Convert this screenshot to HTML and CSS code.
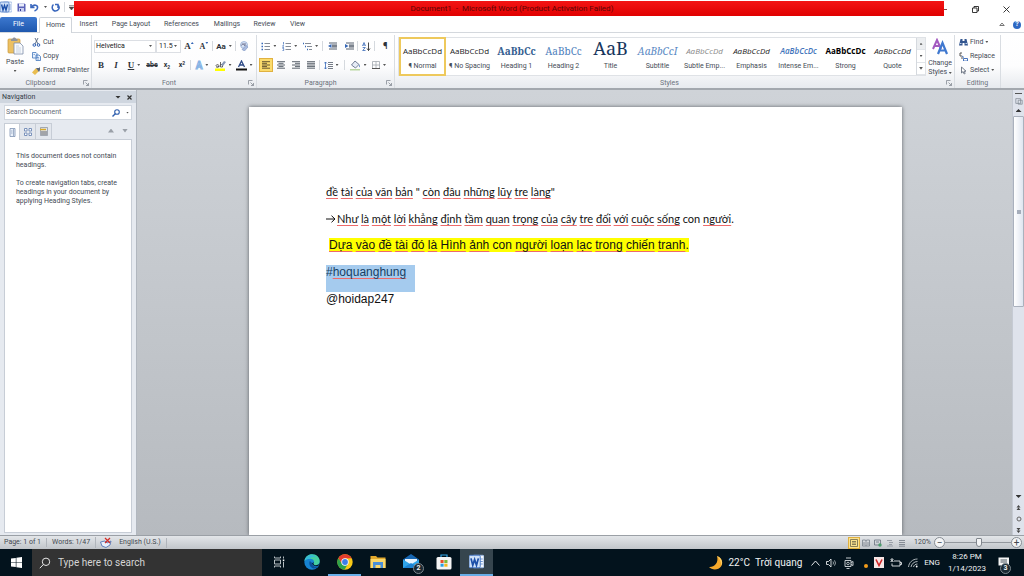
FILE: index.html
```html
<!DOCTYPE html>
<html lang="vi">
<head>
<meta charset="utf-8">
<title>Document1 - Microsoft Word</title>
<link rel="stylesheet" href="styles.css">
</head>
<body>
<svg class="defs" aria-hidden="true">
  <symbol id="word" viewBox="0 0 12 12"><rect x="3" y="1" width="9" height="10" rx="1" fill="#f4f8fe" stroke="#8cacdc" stroke-width=".7"/><path d="M9 4h2M9 6h2M9 8h2" stroke="#5b87cc" stroke-width=".7"/><rect x="0" y="1" width="9" height="10" rx="1" fill="#cfe0f7" stroke="#3c6fc0" stroke-width=".7"/><path d="M1.600 3.500 3 9 4.500 4.500 6 9 7.500 3.500" fill="none" stroke="#1d4fa8" stroke-width="1.400"/></symbol>
  <symbol id="launch" viewBox="0 0 6 6"><path d="M.5 4.500V.5h4M2.500 2.500l3 3M5.500 3v2.500H3" fill="none" stroke="#858b94" stroke-width=".8"/></symbol>
  <symbol id="globe" viewBox="0 0 10 10"><path d="M1 2h6v6H1zM4 4h5v5H4z" fill="none" stroke="#7f8791" stroke-width=".9"/></symbol>
</svg>

<header class="titlebar">
  <div class="quick">
    <svg width="12" height="12"><use href="#word"/></svg>
    <button aria-label="Save"><svg width="9" height="9" viewBox="0 0 9 9"><path d="M.5.5h7l1 1v7h-8z" fill="#5b62b8"/><path d="M2 .5h5v3H2z" fill="#e8ecfa"/><path d="M2 5h5v4H2z" fill="#c9cff0"/><path d="M3 6h1v2H3z" fill="#333a90"/></svg></button>
    <button class="wide" aria-label="Undo"><svg width="9" height="9" viewBox="0 0 9 9"><path d="M1 1v3.500h3.500M1.500 4C4 1 8 2 7.500 5 7.300 6.800 6 7.500 4.500 8" fill="none" stroke="#3a67bd" stroke-width="1.600"/></svg><i class="caret"></i></button>
    <button aria-label="Repeat"><svg width="9" height="9" viewBox="0 0 9 9"><path d="M2.500 1.500C0 4 1.500 8 4.500 8s5-3.500 2.500-6M7 5V1.500H4" fill="none" stroke="#3a67bd" stroke-width="1.500"/></svg></button>
    <i class="sep"></i>
    <button class="slim" aria-label="Customize"><svg width="5" height="5" viewBox="0 0 5 5"><path d="M0 .5h5M0 2h5L2.500 5z" fill="#444" stroke="#444" stroke-width=".5"/></svg></button>
  </div>
  <h1 class="title">Document1&nbsp; - &nbsp;Microsoft Word (Product Activation Failed)</h1>
  <div class="window">
    <button class="mini" aria-label="Minimize"></button>
    <button aria-label="Restore"><svg width="7" height="7" viewBox="0 0 7 7"><path d="M.5 2h4.500v4.500H.5zM2 2V.5h4.500V5H5" fill="none" stroke="#222" stroke-width=".9"/></svg></button>
    <button aria-label="Close"><svg width="7" height="7" viewBox="0 0 7 7"><path d="m.5.5 6 6m0-6-6 6" stroke="#222" stroke-width=".9"/></svg></button>
  </div>
</header>

<nav class="tabs">
  <button class="file">File</button>
  <button class="tab on">Home</button>
  <button class="tab">Insert</button>
  <button class="tab layout">Page Layout</button>
  <button class="tab refs">References</button>
  <button class="tab mail">Mailings</button>
  <button class="tab">Review</button>
  <button class="tab">View</button>
  <div class="help">
    <svg width="6" height="5" viewBox="0 0 6 5"><path d="M.8 3.500 3 1l2.200 2.500z" fill="none" stroke="#555" stroke-width=".8"/></svg>
    <button class="q" aria-label="Help">?</button>
  </div>
</nav>

<section class="ribbon">
  <div class="group clipboard">
    <div class="body">
      <button class="big"><svg width="17" height="18" viewBox="0 0 17 18"><rect x="1" y="2" width="12" height="14" rx="1" fill="#ecc062" stroke="#c7953a" stroke-width=".7"/><path d="M4 3.500V2h1.500C5.500 0 9 0 9 2h1.500v2H4z" fill="#8e939c"/><path d="M7 6h6l3 3v8H7z" fill="#f8fafd" stroke="#7d8ea8" stroke-width=".8"/><path d="M9 9h3M9 11h5M9 13h5M9 15h5" stroke="#b4c1d4" stroke-width=".7"/></svg><span>Paste</span><i class="caret"></i></button>
      <div class="stack">
        <button><svg width="9" height="9" viewBox="0 0 9 9"><path d="m3 0 3 6M6 0 3 6" stroke="#52627c" stroke-width=".9"/><circle cx="2.300" cy="7" r="1.300" fill="none" stroke="#2e5fb3"/><circle cx="6.500" cy="7" r="1.300" fill="none" stroke="#2e5fb3"/></svg>Cut</button>
        <button><svg width="9" height="9" viewBox="0 0 9 9"><path d="M.5.5h3.500l1 1V6H.5zM4 3h3l1.500 1.500v4H4z" fill="#e9f1fc" stroke="#4377bd" stroke-width=".8"/><path d="M5 5.500h2M5 7h2M1.500 2.500H3" stroke="#4377bd" stroke-width=".6"/></svg>Copy</button>
        <button><svg width="9" height="9" viewBox="0 0 9 9"><path d="M0 6.500 4 2l3 3-4 4z" fill="#e9bd50"/><path d="M4 2h3l1-1v3L7 6z" fill="#59647a"/></svg>Format Painter</button>
      </div>
    </div>
    <footer>Clipboard<button aria-label="Clipboard options"><svg width="6" height="6"><use href="#launch"/></svg></button></footer>
  </div>

  <div class="group font">
    <div class="body rows">
      <div class="row">
        <button class="combo family">Helvetica<i class="caret"></i></button><button class="combo size">11.5<i class="caret"></i></button>
        <button class="t serif" aria-label="Grow font">A<i class="caret up blue"></i></button>
        <button class="t serif small" aria-label="Shrink font">A<i class="caret blue"></i></button>
        <i class="sep"></i>
        <button class="t d">Aa<i class="caret"></i></button>
        <i class="sep"></i>
        <button class="t" aria-label="Clear formatting"><svg width="10" height="10" viewBox="0 0 10 10"><circle cx="5" cy="4" r="3.500" fill="#d5e1f4" stroke="#8ba6cf" stroke-width=".7"/><path d="M2.500 4.500 4 2.500l1.500 2M6 2v3" fill="none" stroke="#446" stroke-width=".7"/><path d="m3 8.500 4-4 2 1.500-3.500 4z" fill="#a9bbdf" stroke="#6d87b9" stroke-width=".5"/></svg></button>
      </div>
      <div class="row">
        <button class="t serif">B</button>
        <button class="t serif it">I</button>
        <button class="t serif d"><u>U</u><i class="caret"></i></button>
        <button class="t small"><s>abe</s></button>
        <button class="t small">x<sub>2</sub></button>
        <button class="t small">x<sup>2</sup></button>
        <i class="sep"></i>
        <button class="t d glow">A<i class="caret"></i></button>
        <button class="t d" aria-label="Highlight"><svg width="11" height="11" viewBox="0 0 11 11"><path d="M1 6c0-2 3-2 3 0v1M4 6.500c-3-1-3 1-2 1s2-1 2-1M5.500 2v5h2V4.500h-2" fill="none" stroke="#444" stroke-width=".8"/><path d="m6 5 3-4 2 1-3 4z" fill="#8797b5"/><path d="M0 8.500h10v2.500H0z" fill="#ffff00"/></svg><i class="caret"></i></button>
        <button class="t d" aria-label="Font colour"><svg width="11" height="11" viewBox="0 0 11 11"><path d="m2.500 7 3-6 3 6M3.500 5h4" fill="none" stroke="#2d4a86" stroke-width="1.300"/><path d="M0 8.500h11v2H0z" fill="#111"/></svg><i class="caret"></i></button>
      </div>
    </div>
    <footer>Font<button aria-label="Font options"><svg width="6" height="6"><use href="#launch"/></svg></button></footer>
  </div>

  <div class="group para">
    <div class="body rows">
      <div class="row">
        <button class="t d" aria-label="Bullets"><svg width="9" height="9" viewBox="0 0 9 9"><path d="M3.500 1.500H9M3.500 4.500H9M3.500 7.500H9" stroke="#777f8b" stroke-width=".9"/><path d="M.5 1.500H2M.5 4.500H2M.5 7.500H2" stroke="#3567b7" stroke-width="1.500"/></svg><i class="caret"></i></button>
        <button class="t d" aria-label="Numbering"><svg width="9" height="9" viewBox="0 0 9 9"><path d="M3.500 1.500H9M3.500 4.500H9M3.500 7.500H9" stroke="#777f8b" stroke-width=".9"/><path d="M1.500 0v2.500M.5 3.500h1L.7 5.500h1.200M.5 6.500h1.200v2H.5" fill="none" stroke="#3567b7" stroke-width=".7"/></svg><i class="caret"></i></button>
        <button class="t d" aria-label="Multilevel list"><svg width="9" height="9" viewBox="0 0 9 9"><path d="M2 1.500h6M4 4.500h5M6 7.500h3" stroke="#777f8b" stroke-width=".9"/><path d="M0 1.500h1M2 4.500h1M4 7.500h1" stroke="#3567b7" stroke-width="1.500"/></svg><i class="caret"></i></button>
        <i class="sep"></i>
        <button class="t wider" aria-label="Decrease indent"><svg width="9" height="9" viewBox="0 0 9 9"><path d="M1 1h8M4 3h5M4 5h5M1 7h8M4 4h5" stroke="#444e5d" stroke-width=".9"/><path d="M3.500 2v4L0 4z" fill="#3567b7"/></svg></button>
        <button class="t" aria-label="Increase indent"><svg width="9" height="9" viewBox="0 0 9 9"><path d="M1 1h8M4 3h5M4 5h5M1 7h8M4 4h5" stroke="#444e5d" stroke-width=".9"/><path d="M0 2v4l3.500-2z" fill="#3567b7"/></svg></button>
        <i class="sep"></i>
        <button class="t" aria-label="Sort"><svg width="9" height="9" viewBox="0 0 9 9"><path d="m.5 4 1.500-3.500L3.500 4M1 3h2M.7 5.500h2.600L.7 8.500h2.800" fill="none" stroke="#3567b7" stroke-width=".8"/><path d="M6.500.5v8M5 6.500l1.500 2 1.500-2" fill="none" stroke="#333" stroke-width=".9"/></svg></button>
        <i class="sep"></i>
        <button class="t wider pil">¶</button>
      </div>
      <div class="row">
        <button class="t sel" aria-label="Align left"><svg width="8" height="8" viewBox="0 0 8 8"><path d="M0 .7h8M0 2.300h5M0 4h8M0 5.600h5M0 7.200h8" stroke="#574a2c" stroke-width=".9"/></svg></button>
        <button class="t" aria-label="Centre"><svg width="8" height="8" viewBox="0 0 8 8"><path d="M0 .7h8M1.500 2.300h5M0 4h8M1.500 5.600h5M0 7.200h8" stroke="#4b525d" stroke-width=".9"/></svg></button>
        <button class="t" aria-label="Align right"><svg width="8" height="8" viewBox="0 0 8 8"><path d="M0 .7h8M3 2.300h5M0 4h8M3 5.600h5M0 7.200h8" stroke="#4b525d" stroke-width=".9"/></svg></button>
        <button class="t" aria-label="Justify"><svg width="8" height="8" viewBox="0 0 8 8"><path d="M0 .7h8M0 2.300h8M0 4h8M0 5.600h8M0 7.200h8" stroke="#4b525d" stroke-width=".9"/></svg></button>
        <i class="sep"></i>
        <button class="t d" aria-label="Line spacing"><svg width="9" height="9" viewBox="0 0 9 9"><path d="M4 1.500h5M4 3.500h5M4 5.500h5M4 7.500h5" stroke="#666e7a" stroke-width=".9"/><path d="M1.500 1v7M0 2.500 1.500 1 3 2.500M0 6.500 1.500 8 3 6.500" fill="none" stroke="#3567b7" stroke-width=".8"/></svg><i class="caret"></i></button>
        <i class="sep gap"></i>
        <button class="t d" aria-label="Shading"><svg width="11" height="11" viewBox="0 0 11 11"><path d="m1.500 5 3.500-4 4 3.500-3.500 3.500z" fill="#e6ecf6" stroke="#52617c" stroke-width=".8"/><path d="M9 4.500c1 1 1.500 2 .5 3z" fill="#3567b7"/><path d="M0 9h10v1.500H0z" fill="#b9d6a0"/></svg><i class="caret"></i></button>
        <button class="t d" aria-label="Borders"><svg width="8" height="8" viewBox="0 0 8 8"><path d="M.5.5h7v7h-7zM4 .5v7M.5 4h7" fill="none" stroke="#a2a8b0" stroke-width=".8"/><path d="M0 7.500h8" stroke="#555"/></svg><i class="caret"></i></button>
      </div>
    </div>
    <footer>Paragraph<button aria-label="Paragraph options"><svg width="6" height="6"><use href="#launch"/></svg></button></footer>
  </div>

  <div class="group styles">
    <div class="body">
      <div class="gallery">
        <button class="style on"><b>AaBbCcDd</b><span>¶ Normal</span></button>
        <button class="style"><b>AaBbCcDd</b><span>¶ No Spacing</span></button>
        <button class="style h1"><b>AaBbCc</b><span>Heading 1</span></button>
        <button class="style h2"><b>AaBbCc</b><span>Heading 2</span></button>
        <button class="style ti"><b>AaB</b><span>Title</span></button>
        <button class="style su"><b>AaBbCcI</b><span>Subtitle</span></button>
        <button class="style se"><b>AaBbCcDd</b><span>Subtle Emp...</span></button>
        <button class="style em"><b>AaBbCcDd</b><span>Emphasis</span></button>
        <button class="style ie"><b>AaBbCcDc</b><span>Intense Em...</span></button>
        <button class="style st"><b>AaBbCcDc</b><span>Strong</span></button>
        <button class="style em"><b>AaBbCcDd</b><span>Quote</span></button>
        <div class="scroller"><button aria-label="Up"><i class="caret up"></i></button><button aria-label="Down"><i class="caret"></i></button><button aria-label="More"><i class="caret more"></i></button></div>
      </div>
      <button class="big change"><svg width="18" height="18" viewBox="0 0 18 18"><path d="m2 11 4-9 4 9M3.500 8h5" fill="none" stroke="#a35ac0" stroke-width="2"/><path d="m7 16 4.500-11L16 16M8.500 12.500h6" fill="none" stroke="#3f78cf" stroke-width="2.200"/></svg><span>Change<br>Styles <i class="caret"></i></span></button>
    </div>
    <footer>Styles<button aria-label="Styles options"><svg width="6" height="6"><use href="#launch"/></svg></button></footer>
  </div>

  <div class="group editing">
    <div class="body">
      <div class="stack">
        <button><svg width="9" height="9" viewBox="0 0 9 9"><path d="M1.500 1h2v2h2V1h2L9 7.500H5.500V5h-2v2.500H0z" fill="#33568f"/><path d="M1 5.500h1.500M6.500 5.500H8" stroke="#bcd0ee"/></svg>Find <i class="caret"></i></button>
        <button><svg width="9" height="9" viewBox="0 0 9 9"><path d="M1 1v3h2M3 1H1M2 6h2" fill="none" stroke="#555"/><path d="M4.500 6.500h4V9h-4zM3 4l2 1.500" fill="none" stroke="#3567b7" stroke-width=".9"/></svg>Replace</button>
        <button><svg width="9" height="9" viewBox="0 0 9 9"><path d="M2.500 1v6l1.500-1.400L5.200 8l1-.6L5 5.200h2z" fill="#fff" stroke="#555f70" stroke-width=".8"/></svg>Select <i class="caret"></i></button>
      </div>
    </div>
    <footer class="plain">Editing</footer>
  </div>
</section>

<main class="workspace">
  <aside class="pane">
    <header>Navigation<span><i class="caret big-caret"></i><button aria-label="Close pane"><svg width="5" height="5" viewBox="0 0 5 5"><path d="m.5.5 4 4m0-4-4 4" stroke="#333" stroke-width="1.200"/></svg></button></span></header>
    <label class="find"><input type="text" placeholder="Search Document" aria-label="Search Document"><svg width="8" height="8" viewBox="0 0 8 8"><circle cx="5" cy="3" r="2.300" fill="none" stroke="#2f5fae" stroke-width="1.100"/><path d="M3.300 4.700.5 7.500" stroke="#2f5fae" stroke-width="1.400"/></svg><i class="caret"></i></label>
    <div class="views">
      <button class="on" aria-label="Headings"><svg width="7" height="9" viewBox="0 0 7 9"><path d="M1 .5h5v8H1z" fill="#eaf1fb" stroke="#7f93b2" stroke-width=".8"/><path d="M4.500 1v7M2 3h1.500M2 5h1.500" stroke="#7f93b2" stroke-width=".7"/></svg></button>
      <button aria-label="Pages"><svg width="8" height="8" viewBox="0 0 8 8"><path d="M.5.5h2.500V3H.5zM5 .5h2.500V3H5zM.5 5h2.500v2.500H.5zM5 5h2.500v2.500H5z" fill="#fff" stroke="#6d88b5" stroke-width=".9"/></svg></button>
      <button aria-label="Results"><svg width="8" height="9" viewBox="0 0 8 9"><path d="M.5.5h7v8h-7z" fill="#dfe3ea" stroke="#878e99" stroke-width=".7"/><path d="M0 2.500h6" stroke="#d9a928" stroke-width="1.500"/><path d="M1 5h6M1 7h6" stroke="#666"/></svg></button>
      <span><i class="caret up grey"></i><i class="caret grey"></i></span>
    </div>
    <div class="message">
      <p>This document does not contain headings.</p>
      <p>To create navigation tabs, create headings in your document by applying Heading Styles.</p>
    </div>
  </aside>
  <div class="canvas">
    <article class="page">
      <p><u>đề</u> <u>tài</u> <u>của</u> <u>văn</u> <u>bản</u> " <u>còn</u> <u>đâu</u> <u>những</u> <u>lũy</u> <u>tre</u> <u>làng</u>"</p>
      <p><svg class="arrow" width="10" height="8" viewBox="0 0 10 8"><path d="M0 4h9M5.500.7 9 4 5.500 7.300" fill="none" stroke="#111"/></svg><u>Như</u> <u>là</u> <u>một</u> <u>lời</u> <u>khẳng</u> <u>định</u> <u>tầm</u> <u>quan</u> <u>trọng</u> <u>của</u> <u>cây</u> <u>tre</u> <u>đối</u> <u>với</u> <u>cuộc</u> <u>sống</u> con <u>người</u>.</p>
      <p class="sans hl"><mark><u>Dựa</u> <u>vào</u> <u>đề</u> <u>tài</u> <u>đó</u> <u>là</u> <u>Hình</u> <u>ảnh</u> con <u>người</u> <u>loạn</u> <u>lạc</u> <u>trong</u> <u>chiến</u> <u>tranh</u>.</mark></p>
      <p class="sans"><span class="selected">#<u>hoquanghung</u></span></p>
      <p class="sans">@hoidap247</p>
    </article>
  </div>
  <div class="vscroll">
    <i class="split"></i>
    <svg width="8" height="8"><use href="#globe"/></svg>
    <button aria-label="Scroll up"><i class="caret up big-caret"></i></button>
    <div class="track"><div class="thumb"><i></i></div></div>
    <button aria-label="Scroll down"><i class="caret big-caret"></i></button>
    <button aria-label="Previous page"><svg width="5" height="6" viewBox="0 0 5 6"><path d="M2.500 0 4.500 2.500h-4zM2.500 2.500l2 2.500h-4z" fill="#444"/></svg></button>
    <button aria-label="Browse object"><svg width="6" height="6" viewBox="0 0 6 6"><circle cx="3" cy="3" r="2" fill="none" stroke="#666"/></svg></button>
    <button aria-label="Next page"><svg width="5" height="6" viewBox="0 0 5 6"><path d="M2.500 6 .5 3.500h4zM2.500 3.500l-2-2.500h4z" fill="#444"/></svg></button>
  </div>
</main>

<footer class="status">
  <span>Page: 1 of 1</span><span>Words: 1/47</span>
  <span class="proof"><svg width="12" height="11" viewBox="0 0 12 11"><path d="M.5 5 5 4l2 2 4-2-1 4-4 2.500L2 9z" fill="#e9f0fb" stroke="#5577b7" stroke-width=".9"/><path d="m5 1 5 5m0-5L5 6" stroke="#d42c26" stroke-width="1.200"/></svg></span>
  <span class="lang">English (U.S.)</span>
  <i class="sep dark"></i>
  <div class="zoom">
    <button class="on" aria-label="Print layout"><svg width="8" height="8" viewBox="0 0 8 8"><path d="M.5.5h7v7h-7zM2 2.500h4M2 4h4M2 5.500h4" fill="none" stroke="#6e6748" stroke-width=".8"/></svg></button>
    <button aria-label="Reading"><svg width="8" height="8" viewBox="0 0 8 8"><path d="M.5 1h3L4 2l.5-1h3v6H.5zM4 2v5M2 3v3M6 3v3" fill="none" stroke="#79818c" stroke-width=".8"/></svg></button>
    <button aria-label="Web layout"><svg width="8" height="8" viewBox="0 0 8 8"><path d="M.5 1h6v5h-6zM2 3h3" fill="none" stroke="#68717e" stroke-width=".8"/><circle cx="6" cy="6" r="1.700" fill="#4c9d6d"/></svg></button>
    <button aria-label="Outline"><svg width="8" height="8" viewBox="0 0 8 8"><path d="M1 1.500h5M3 3.500h4M3 5.500h3M1 7h6" stroke="#8b929c" stroke-width=".8"/></svg></button>
    <button aria-label="Draft"><svg width="8" height="8" viewBox="0 0 8 8"><path d="M1 1.500h6M1 3.500h6M1 5.500h6M1 7.200h6" stroke="#7e858f" stroke-width=".9"/></svg></button>
    <span class="pct">120%</span>
    <button class="round" aria-label="Zoom out">−</button>
    <input type="range" min="0" max="100" value="52" aria-label="Zoom">
    <button class="round" aria-label="Zoom in">+</button>
  </div>
</footer>

<footer class="taskbar">
  <button class="start" aria-label="Start"><svg width="11" height="11" viewBox="0 0 11 11"><path d="M0 1.600 4.800.9v4.300H0zM5.400.8 11 0v5.200H5.400zM0 5.800h4.800v4.300L0 9.400zM5.400 5.800H11V11l-5.600-.8z" fill="#fff"/></svg></button>
  <label class="search"><svg width="12" height="12" viewBox="0 0 12 12"><circle cx="7" cy="4.800" r="3.700" fill="none" stroke="#e6e6e6"/><path d="M4.400 7.500.8 11.200" stroke="#e6e6e6"/></svg><input type="text" placeholder="Type here to search" aria-label="Type here to search"></label>
  <button class="app" aria-label="Task view"><svg width="12" height="12" viewBox="0 0 12 12"><path d="M1.500.5V2h6V.5M1.500 4h6v4h-6zM1.500 11.500V10h6v1.500M10.500.5v2M10.500 6v5.500" fill="none" stroke="#c9d0d4" stroke-width=".9"/><path d="M9.800 3.500h1.500v1.700H9.800z" fill="#fff"/></svg></button>
  <button class="app" aria-label="Edge"><svg width="16" height="16" viewBox="0 0 16 16"><circle cx="8" cy="8" r="7.700" fill="#1683d2"/><path d="M.5 7C1.200 2.500 4.500.3 8 .3c5 0 7.700 3.500 7.700 6.700 0 2.800-2 4.200-4 4.200-2 0-2.700-.8-2-1.700 1.300-1.800-.2-4.700-3.500-4.700C3.500 4.800 1.500 5.700.5 7z" fill="#45cfa0"/><path d="M.5 7C1.500 2.500 5 .8 8 1.200c2 .2 3.500 1.300 4 2.300-3-1.500-5-.7-6 1.300C3.500 4.800 1.500 5.700.5 7z" fill="#36b9d9"/><path d="M5.800 7c-1.500 3 .5 7 4.200 7.500 2 0 4-1 5-2.500-3 1.500-7 .5-7.300-3.500z" fill="#0b4f9b"/><path d="M9.600 8c0 1-.8 1.700.5 2.700 1 .8 3.900.8 5-.9l-.3 1.500C12.500 13 9 12 8 9.500z" fill="#041420"/></svg></button>
  <button class="app run" aria-label="Chrome"><svg width="16" height="16" viewBox="0 0 16 16"><circle cx="8" cy="8" r="7.700" fill="#f9c916"/><path d="M1.300 4.200A7.700 7.700 0 0 1 14.700 4.200L8 4.500 5 9.700z" fill="#e23b2e"/><path d="M1.300 4.200A7.700 7.700 0 0 0 7.500 15.700L11 9.700 5 9.700z" fill="#2ca24c"/><circle cx="8" cy="8" r="3.700" fill="#fff"/><circle cx="8" cy="8" r="2.900" fill="#3c7ee8"/></svg></button>
  <button class="app" aria-label="File Explorer"><svg width="16" height="14" viewBox="0 0 16 14"><path d="M.5 1h5.500l1.500 1.500h8V13H.5z" fill="#e3a92c"/><path d="M.5 4h15v9H.5z" fill="#fbd86b"/><path d="M3 7h10v6h-2.500v-3h-5v3H3z" fill="#4a8fd8"/></svg></button>
  <button class="app" aria-label="Mail"><svg width="16" height="15" viewBox="0 0 16 15"><path d="M0 5.500 8 0l8 5.500V14H0z" fill="#1767b3"/><path d="M2 5h12v6H2z" fill="#eaf6ff"/><path d="m0 5.500 8 5 8-5V14H0z" fill="#2fa5ea"/><path d="m0 14 8-5 8 5z" fill="#1c83d3"/></svg><em>2</em></button>
  <button class="app" aria-label="Store"><svg width="16" height="16" viewBox="0 0 16 16"><path d="M5 4V1h6v3" fill="none" stroke="#35a7e8" stroke-width="1.200"/><rect x=".5" y="3" width="15" height="12.500" rx="1.500" fill="#f5f5f5"/><path d="M4.500 6H7.600v3H4.500z" fill="#e8502c"/><path d="M8.300 6h3.200v3H8.300z" fill="#7cb83b"/><path d="M4.500 9.700H7.600v3H4.500z" fill="#2a9fe3"/><path d="M8.300 9.700h3.200v3H8.300z" fill="#f5b921"/></svg></button>
  <button class="app run active" aria-label="Word"><svg width="15" height="15"><use href="#word"/></svg></button>
  <div class="tray">
    <button class="weather"><svg width="16" height="16" viewBox="0 0 16 16"><path d="M9 1c5 2 6.500 7 4 10.500-2.500 3.800-9 4-12 .5 5 .5 10-4 8-11z" fill="#f5a92b"/><path d="M9 1c5 2 6 6 4.500 9.500C13 6 11 3 9 1z" fill="#ffcf62"/></svg><span>22°C</span><span>Trời quang</span></button>
    <svg width="9" height="6" viewBox="0 0 9 6"><path d="m.5 5.500 4-4.500 4 4.500" fill="none" stroke="#e4e8ea"/></svg>
    <svg width="12" height="10" viewBox="0 0 12 10"><path d="M.5 3.500h2L5 1v8L2.500 6.500h-2z" fill="none" stroke="#e4e8ea" stroke-width=".9"/><path d="M7 3.500q1 1.500 0 3M8.500 2.300q2 2.700 0 5.400" fill="none" stroke="#b9c0c4" stroke-width=".8"/></svg>
    <svg width="10" height="12" viewBox="0 0 10 12"><path d="M2 1h5M1 3.500h6v6H1zM7 5.500l2-1v4l-2-1M2.500 11.500h3" fill="none" stroke="#d8dde0" stroke-width=".9"/><circle cx="4" cy="6.500" r="1.300" fill="none" stroke="#d8dde0" stroke-width=".8"/></svg>
    <i class="dot"></i>
    <svg width="10" height="11" viewBox="0 0 10 11"><path d="M0 0h10v11H0z" fill="#f8e6e5"/><path d="m2 2.500 3 6 3-6" fill="none" stroke="#d02426" stroke-width="1.600"/></svg>
    <svg width="12" height="10" viewBox="0 0 12 10"><path d="M4 3h6v5H2V5.500M10 4.500h1.500v2H10M.5 1l3 3M3.500 1l-3 3M2 0v4" fill="none" stroke="#e4e8ea" stroke-width=".9"/></svg>
    <svg width="10" height="10" viewBox="0 0 10 10"><path d="M.5 9C1 4.500 4.500 1 9.500 1M3 9c.5-3 3-5.500 6.500-5.500M5.500 9c.3-1.700 2-3 4-3" fill="none" stroke="#bfc6ca" stroke-width=".9"/><circle cx="8.700" cy="8.500" r=".9" fill="#fff"/></svg>
    <span class="eng">ENG</span>
    <time class="clock">8:26 PM<br>1/14/2023</time>
    <button class="note" aria-label="Notifications"><svg width="12" height="12" viewBox="0 0 12 12"><path d="M.5.5h10.500v8H6L3 11V8.500H.5z" fill="#f4f4f4"/><path d="M2.500 3h6.500M2.500 5h6.500" stroke="#3b4850" stroke-width=".9"/></svg><em>3</em></button>
  </div>
</footer>
</body>
</html>
```
FILE: styles.css
```css
* { box-sizing: border-box; }
body {
  margin: 0;
  height: 100vh;
  display: flex;
  flex-direction: column;
  overflow: hidden;
  background: #fff;
  color: #444b55;
  font: 7px/9px Roboto, "Noto Sans", sans-serif;
}
button, input {
  margin: 0;
  padding: 0;
  border: 0;
  background: none;
  color: inherit;
  font: inherit;
}
button { display: flex; align-items: center; justify-content: center; }
svg { flex: none; display: block; }
.defs { position: absolute; width: 0; height: 0; }

.caret {
  flex: none;
  display: inline-block;
  width: 3px;
  height: 2px;
  background: #555;
  clip-path: polygon(0 0, 100% 0, 50% 100%);
}
.caret.up { clip-path: polygon(50% 0, 100% 100%, 0 100%); }
.caret.blue { align-self: flex-start; margin-top: 3px; background: #3567b7; }
.big-caret { width: 6px; height: 3px; background: #333; }
.caret.grey { width: 6px; height: 4px; background: #9aa0a8; }
.caret.more { width: 4px; height: 3px; }
.sep { flex: none; width: 1px; height: 10px; background: #d5d9de; }
.sep.gap { margin: 0 2px; }
.sep.dark { background: #b0b5bb; }

/* Title bar */
.titlebar { display: flex; height: 17px; flex: none; align-items: flex-start; }
.quick { display: flex; align-items: center; width: 74px; height: 14px; gap: 4px; }
.quick .wide { gap: 5px; width: 17px; }
.quick button:nth-of-type(1) { width: 14px; }
.title {
  flex: 1;
  margin: 1px 0 0;
  height: 15px;
  padding-left: 6px;
  background: linear-gradient(#f31515, #e00000);
  color: #5a0606;
  font: 8px/15px Roboto, sans-serif;
  text-align: center;
}
.window { display: flex; width: 80px; height: 19px; align-items: center; }
.window button { width: 31px; height: 19px; }
.window .mini { width: 16px; justify-content: flex-start; }
.mini::before { content: ""; width: 3px; height: 1px; background: #844; }

/* Tabs */
.tabs { display: flex; flex: none; height: 16px; border-bottom: 1px solid #d4d8dd; align-items: stretch; }
.file { width: 37px; background: linear-gradient(#3c78cf, #1f58ae); color: #fff; border-radius: 2px 2px 0 0; }
.tab { width: 33px; }
.tab.on { margin: 0 0 -1px 2px; background: #fff; border: 1px solid #cfd4da; border-bottom: 0; border-radius: 2px 2px 0 0; }
.tab.layout { width: 52px; }
.tab.refs { width: 49px; }
.tab.mail { width: 42px; }
.help { display: flex; align-items: center; gap: 8px; margin-left: auto; padding-right: 3px; }
.q { width: 8px; height: 8px; border-radius: 50%; background: #2e69c4; color: #fff; font-weight: 700; }

/* Ribbon */
.ribbon {
  display: flex;
  flex: none;
  height: 57px;
  padding-top: 2px;
  background: linear-gradient(#fff 0, #fdfdfe 60%, #e7eaee);
  border-bottom: 2px solid #a3a8ae;
}
.group { display: flex; flex-direction: column; border-right: 1px solid #d9dde2; }
.group .body { display: flex; flex: 1; min-height: 0; }
.group footer { position: relative; height: 11px; padding: 1px 10px 0 0; text-align: center; line-height: 11px; color: #6b727c; }
.group footer.plain { padding-right: 0; }
.group footer button { position: absolute; right: 2px; top: 3px; }
.clipboard { width: 92px; }
.font { width: 165px; }
.para { width: 138px; }
.styles { width: 560px; }
.editing { width: 46px; }
.big { flex-direction: column; width: 30px; padding-top: 2px; gap: 3px; justify-content: flex-start; }
.stack { display: flex; flex-direction: column; padding: 0 0 0 2px; }
.stack button { height: 14px; gap: 2px; justify-content: flex-start; white-space: nowrap; }
.editing .stack { padding-left: 4px; }

.rows { flex-direction: column; padding: 4px 0 0 2px; gap: 5px; }
.row { display: flex; align-items: center; height: 14px; gap: 1px; }
.t { width: 14px; height: 14px; font-weight: 700; font-size: 8px; color: #2e333a; }
.t.d { width: 20px; gap: 3px; }
.t.wider { width: 18px; }
.t.serif { font-family: "Liberation Serif", serif; font-size: 9px; }
.t.small { font-size: 7px; }
.t.serif.small { font-size: 8px; }
.t.it { font-style: italic; }
.t.pil { font-size: 9px; }
.t sup, .t sub { font-size: 5px; line-height: 5px; }
.t sup { padding-bottom: 4px; }
.t sub { padding-top: 4px; }
.t.glow { color: #fff; font-size: 10px; -webkit-text-stroke: 1px #86b3e4; }
.t.sel { background: #fbdb6c; border: 1px solid #e0b140; }
.combo { height: 13px; padding: 0 3px; justify-content: space-between; border: 1px solid #dcdfe4; background: #fff; color: #222; }
.combo.family { width: 62px; padding-left: 1px; }
.combo.size { width: 25px; margin-left: -1px; padding-left: 2px; }

.gallery { display: flex; width: 528px; height: 39px; margin: 2px 0 0 3px; border: 1px solid #dfe2e6; background: #fff; }
.style { flex-direction: column; width: 47px; justify-content: flex-start; border: 1px solid transparent; }
.style b { height: 21px; font: 400 8px/24px "Open Sans", sans-serif; color: #222; white-space: nowrap; }
.style span { white-space: nowrap; line-height: 12px; }
.style.on { border: 2px solid #eec95c; margin: -1px 0; }
.h1 b, .h2 b, .ti b, .su b { font-family: "Noto Serif", "DejaVu Serif", "Liberation Serif", serif; }
.h1 b { font-size: 10px; color: #365f91; font-weight: 700; }
.h2 b { font-size: 10px; color: #4f81bd; }
.ti b { font-size: 18px; line-height: 18px; color: #17365d; }
.su b { font-size: 10px; color: #5b8ac4; font-style: italic; }
.se b { color: #888; font-style: italic; }
.em b { font-style: italic; }
.ie b { color: #3f74bb; font-style: italic; font-weight: 600; }
.st b { color: #000; font-weight: 700; }
.scroller { display: flex; flex-direction: column; flex: 1; border-left: 1px solid #d5d9de; }
.scroller button { flex: 1; border-bottom: 1px solid #e2e5e9; }
.scroller button:first-child { background: #eceef0; }
.change { width: 28px; padding-top: 3px; }

/* Workspace */
.workspace { display: flex; flex: 1; min-height: 0; background: linear-gradient(#cfd3d8, #b6babf); }
.pane { display: flex; flex-direction: column; width: 137px; padding: 2px 4px; background: #e6eaf0; border-right: 1px solid #b1b7bf; }
.pane header { display: flex; justify-content: space-between; align-items: center; height: 12px; margin: -1px -4px 2px; padding: 0 4px 0 2px; background: #cfd6df; color: #333b47; }
.pane header span { display: flex; align-items: center; gap: 6px; }
.find { display: flex; align-items: center; gap: 6px; height: 15px; padding: 0 2px 0 1px; background: #fff; border: 1px solid #d1d7df; }
.find input { flex: 1; min-width: 0; outline: 0; }
.find input::placeholder { color: #666d77; }
.views { display: flex; height: 17px; margin-top: 3px; }
.views button { width: 16px; background: #e3e7ed; border: 1px solid #c7cdd6; border-left: 0; }
.views .on { background: #fff; border-bottom: 0; border-left: 1px solid #c7cdd6; }
.views span { display: flex; flex: 1; gap: 8px; align-items: center; justify-content: flex-end; padding: 0 4px 1px 0; border-bottom: 1px solid #c7cdd6; }
.message { flex: 1; padding: 12px 8px 0 11px; background: #fff; border: 1px solid #c7cdd6; border-top: 0; }
.message p { margin: 0 0 9px; }
.canvas { flex: 1; display: flex; justify-content: center; padding: 17px 0 0 2px; overflow: hidden; min-width: 0; }
.page {
  width: 653px;
  padding: 71px 77px 0;
  background: #fff;
  box-shadow: 0 0 4px #5c6166;
  color: #111;
  font: 11px/27px Lato, "Open Sans", sans-serif;
}
.page p { margin: 0; white-space: nowrap; }
.page u { text-decoration: underline 1px #ee6a6a; text-underline-offset: 2px; text-decoration-skip-ink: none; }
.page .sans { font-family: "Liberation Sans", Arial, sans-serif; font-size: 12px; }
.page .hl { padding-left: 3px; }
.page mark { background: #ff0; color: #111; }
.arrow { display: inline-block; margin-right: 1px; }
.selected { display: inline-block; padding: 0 9px 12px 0; line-height: 15px; margin-bottom: -12px; background: #a5cbee; color: #173f63; }

.vscroll { display: flex; flex-direction: column; align-items: center; width: 12px; background: #dfe3ec; border-left: 1px solid #c5cad3; }
.split { width: 7px; height: 1px; margin: 3px 0; background: #555; flex: none; }
.vscroll button { height: 11px; flex: none; }
.track { flex: 1; width: 100%; }
.thumb { display: flex; align-items: center; justify-content: center; height: 51%; background: linear-gradient(90deg, #fff, #dfe5f0); border: 1px solid #aab1bd; border-radius: 1px; }
.thumb i { width: 4px; height: 4px; background: #a5adba; }

/* Status bar */
.status { display: flex; flex: none; height: 14px; align-items: center; padding-left: 4px; background: linear-gradient(#e3e6e9, #c1c5ca); border-top: 1px solid #9ba0a6; color: #434950; }
.status > span { padding-right: 5px; }
.status > span + span { border-left: 1px solid #b0b5bb; padding-left: 5px; }
.status > span.proof { padding: 0 7px 0 4px; }
.status > span.lang { border-left: 0; padding: 0 5px 0 0; }
.zoom { display: flex; align-items: center; margin-left: auto; padding-right: 2px; }
.zoom button { width: 12px; height: 12px; }
.zoom .on { background: #fbe28d; border: 1px solid #dfb041; }
.zoom .pct { margin: 0 3px 0 6px; }
.zoom .round { width: 11px; height: 11px; border: 1px solid #868c93; border-radius: 50%; background: #f4f5f6; font-size: 10px; line-height: 8px; }
.zoom input { width: 66px; height: 11px; appearance: none; }
.zoom input::-webkit-slider-runnable-track { height: 1px; background: #92979d; }
.zoom input::-webkit-slider-thumb { appearance: none; width: 6px; height: 9px; margin-top: -4px; background: #f3f4f5; border: 1px solid #7f858c; border-radius: 1px 1px 3px 3px; }

/* Taskbar */
.taskbar { display: flex; flex: none; height: 27px; background: #03131d; color: #f0f2f3; font-size: 10px; line-height: 12px; }
.start { width: 32px; }
.search { display: flex; align-items: center; gap: 7px; width: 230px; padding-left: 7px; background: #333; }
.search input { flex: 1; min-width: 0; outline: 0; }
.search input::placeholder { color: #d5d5d5; }
.app { position: relative; width: 33px; border-bottom: 2px solid transparent; }
.run { border-bottom-color: #68aee8; }
.active { background-color: #36454e; }
.taskbar em {
  position: absolute;
  right: 3px;
  bottom: 0;
  width: 11px;
  height: 11px;
  border: 1px solid #7c878e;
  border-radius: 50%;
  background: #1a2932;
  font: 700 7px/9px Roboto, sans-serif;
  text-align: center;
}
.tray { display: flex; align-items: center; gap: 6px; margin-left: auto; padding-right: 10px; }
.weather { gap: 5px; margin-right: 3px; }
.dot { align-self: flex-end; width: 4px; height: 4px; margin: 0 0 8px 4px; border-radius: 50%; background: #f39c1b; }
.eng { font-size: 8px; }
.clock { width: 42px; text-align: center; font-size: 8px; }
.note { position: relative; width: 20px; height: 22px; }
```
